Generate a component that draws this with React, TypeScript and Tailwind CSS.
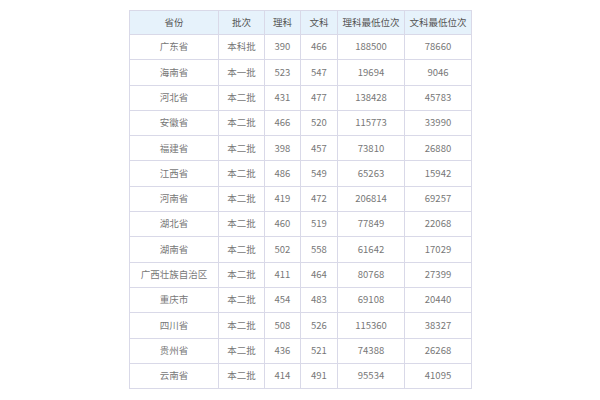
const rows: [string, string, string, string, string, string][] = [
  ['广东省', '本科批', '390', '466', '188500', '78660'],
  ['海南省', '本一批', '523', '547', '19694', '9046'],
  ['河北省', '本二批', '431', '477', '138428', '45783'],
  ['安徽省', '本二批', '466', '520', '115773', '33990'],
  ['福建省', '本二批', '398', '457', '73810', '26880'],
  ['江西省', '本二批', '486', '549', '65263', '15942'],
  ['河南省', '本二批', '419', '472', '206814', '69257'],
  ['湖北省', '本二批', '460', '519', '77849', '22068'],
  ['湖南省', '本二批', '502', '558', '61642', '17029'],
  ['广西壮族自治区', '本二批', '411', '464', '80768', '27399'],
  ['重庆市', '本二批', '454', '483', '69108', '20440'],
  ['四川省', '本二批', '508', '526', '115360', '38327'],
  ['贵州省', '本二批', '436', '521', '74388', '26268'],
  ['云南省', '本二批', '414', '491', '95534', '41095'],
];

const headers = ['省份', '批次', '理科', '文科', '理科最低位次', '文科最低位次'];
const widths = [89, 46, 36, 37, 67, 67];

export default function App() {
  return (
    <div className="w-[600px] h-[400px] bg-white pt-[10px] pl-[129px] font-['Noto_Sans_CJK_SC',sans-serif]">
      <table className="table-fixed border-collapse w-[343px] text-center">
        <colgroup>
          {widths.map((w, i) => (
            <col key={i} style={{ width: w }} />
          ))}
        </colgroup>
        <thead>
          <tr className="h-[24px] bg-[#e6f2fb]">
            {headers.map((h) => (
              <th key={h} className="border border-[#d9d9e8] text-[9.5px] font-normal text-[#555] leading-none p-0">
                {h}
              </th>
            ))}
          </tr>
        </thead>
        <tbody>
          {rows.map((r) => (
            <tr key={r[0]} className="h-[25.3px]">
              {r.map((c, i) => (
                <td key={i} className="border border-[#d9d9e8] text-[9.5px] text-[#777] leading-none p-0 whitespace-nowrap">
                  {c}
                </td>
              ))}
            </tr>
          ))}
        </tbody>
      </table>
    </div>
  );
}
